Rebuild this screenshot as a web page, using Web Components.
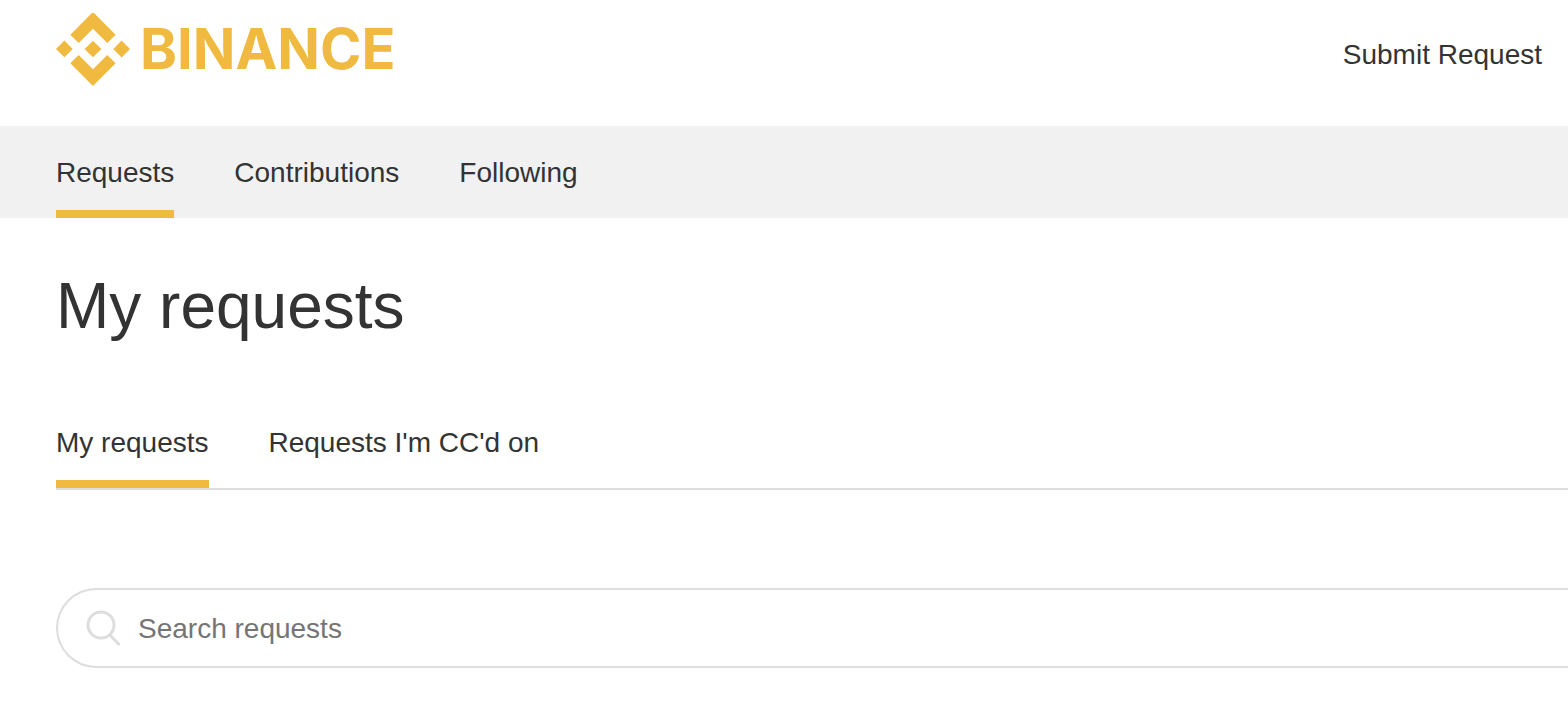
<!DOCTYPE html>
<html lang="en">
<head>
<meta charset="utf-8">
<meta name="viewport" content="width=device-width, initial-scale=1">
<title>My requests – Binance</title>
<style>
  body { margin: 0; background: #fff; color: #333; font: 28px/40px "Liberation Sans", Arial, sans-serif; --brand: #f0b940; --line: #ddd; --gutter: 56px; }
</style>
</head>
<body>
<help-header></help-header>
<help-subnav>
  <nav-tab href="#requests" current>Requests</nav-tab>
  <nav-tab href="#contributions">Contributions</nav-tab>
  <nav-tab href="#following">Following</nav-tab>
</help-subnav>
<requests-page heading="My requests">
  <nav-tab slot="tabs" href="#mine" current>My requests</nav-tab>
  <nav-tab slot="tabs" href="#cc">Requests I'm CC'd on</nav-tab>
  <search-field label="Search requests"></search-field>
</requests-page>
<script>
  const define = (name, html, setup) => customElements.define(name, class extends HTMLElement {
    constructor() {
      super();
      this.attachShadow({ mode: "open" }).innerHTML = html;
    }
    connectedCallback() {
      if (setup) setup(this, this.shadowRoot);
    }
  });

  define("brand-logo", `
    <style>
      :host { display: block; }
      a { display: flex; align-items: center; gap: 10px; color: var(--brand); text-decoration: none; font: 700 56px/74px Inter, sans-serif; }
      svg { display: block; width: 74px; height: 74px; fill: currentColor; }
    </style>
    <a href="#home">
      <svg viewBox="0 0 24 24" aria-hidden="true"><path d="M16.624 13.9202l2.7175 2.7154-7.353 7.353-7.353-7.352 2.7175-2.7164 4.6355 4.6595 4.6356-4.6595zm4.6366-4.6366L24 12l-2.7154 2.7164L18.5682 12l2.6924-2.7164zm-9.272.001l2.7163 2.6914-2.7164 2.7174v-.001L9.2721 12l2.7164-2.7154zm-9.2722-.001L5.4088 12l-2.6914 2.6924L0 12l2.7164-2.7164zM11.9885.0115l7.353 7.329-2.7174 2.7154-4.6356-4.6356-4.6355 4.6595-2.7174-2.7154 7.353-7.353z"/></svg>
      <span>BINANCE</span>
    </a>`);

  define("help-header", `
    <style>
      :host { display: block; }
      header { display: flex; justify-content: space-between; align-items: flex-start; padding: 12px 26px 40px var(--gutter); }
      .submit { margin-top: 23px; color: inherit; text-decoration: none; }
    </style>
    <header><brand-logo></brand-logo><a class="submit" href="#new">Submit Request</a></header>`);

  define("help-subnav", `
    <style>
      :host { display: block; background: #f1f1f1; }
      nav { display: flex; gap: 60px; padding: 26px var(--gutter) 0; }
    </style>
    <nav aria-label="Activity"><slot></slot></nav>`);

  define("nav-tab", `
    <style>
      :host { display: block; white-space: nowrap; }
      a { display: block; padding: 1px 0 17px; border-bottom: 8px solid transparent; color: inherit; text-decoration: none; }
      :host([current]) a { border-color: var(--brand); }
    </style>
    <a><slot></slot></a>`, (host, root) => {
      const link = root.querySelector("a");
      link.href = host.getAttribute("href");
      if (host.hasAttribute("current")) link.setAttribute("aria-current", "page");
    });

  define("requests-page", `
    <style>
      :host { display: block; }
      main { padding: 48px 0 54px var(--gutter); }
      h1 { margin: 0 0 76px; font-size: 64px; line-height: 80px; font-weight: 400; }
      nav { display: flex; gap: 60px; margin-bottom: 98px; border-bottom: 2px solid var(--line); }
    </style>
    <main>
      <h1></h1>
      <nav aria-label="Requests"><slot name="tabs"></slot></nav>
      <slot></slot>
    </main>`, (host, root) => {
      root.querySelector("h1").textContent = host.getAttribute("heading");
    });

  define("search-field", `
    <style>
      :host { display: block; }
      form { display: flex; align-items: center; gap: 16px; padding: 18px 0 18px 28px; border: 2px solid var(--line); border-right: 0; border-radius: 40px 0 0 40px; }
      label { display: block; }
      svg { display: block; width: 36px; height: 40px; fill: none; stroke: #ddd; stroke-width: 3; }
      input { flex: 1; min-width: 0; height: 38px; padding: 2px 0 0; border: 0; outline: 0; background: none; color: inherit; font: inherit; }
      input::placeholder { color: #757575; opacity: 1; }
    </style>
    <form role="search">
      <label for="query"><svg viewBox="0 0 36 40" aria-hidden="true"><circle cx="15" cy="17" r="13"/><path d="M23.500 26.500l10 10.500"/></svg></label>
      <input id="query" type="search">
    </form>`, (host, root) => {
      const text = host.getAttribute("label");
      const input = root.querySelector("input");
      input.placeholder = text;
      root.querySelector("label").setAttribute("aria-label", text);
      input.setAttribute("aria-label", text);
    });
</script>
</body>
</html>
